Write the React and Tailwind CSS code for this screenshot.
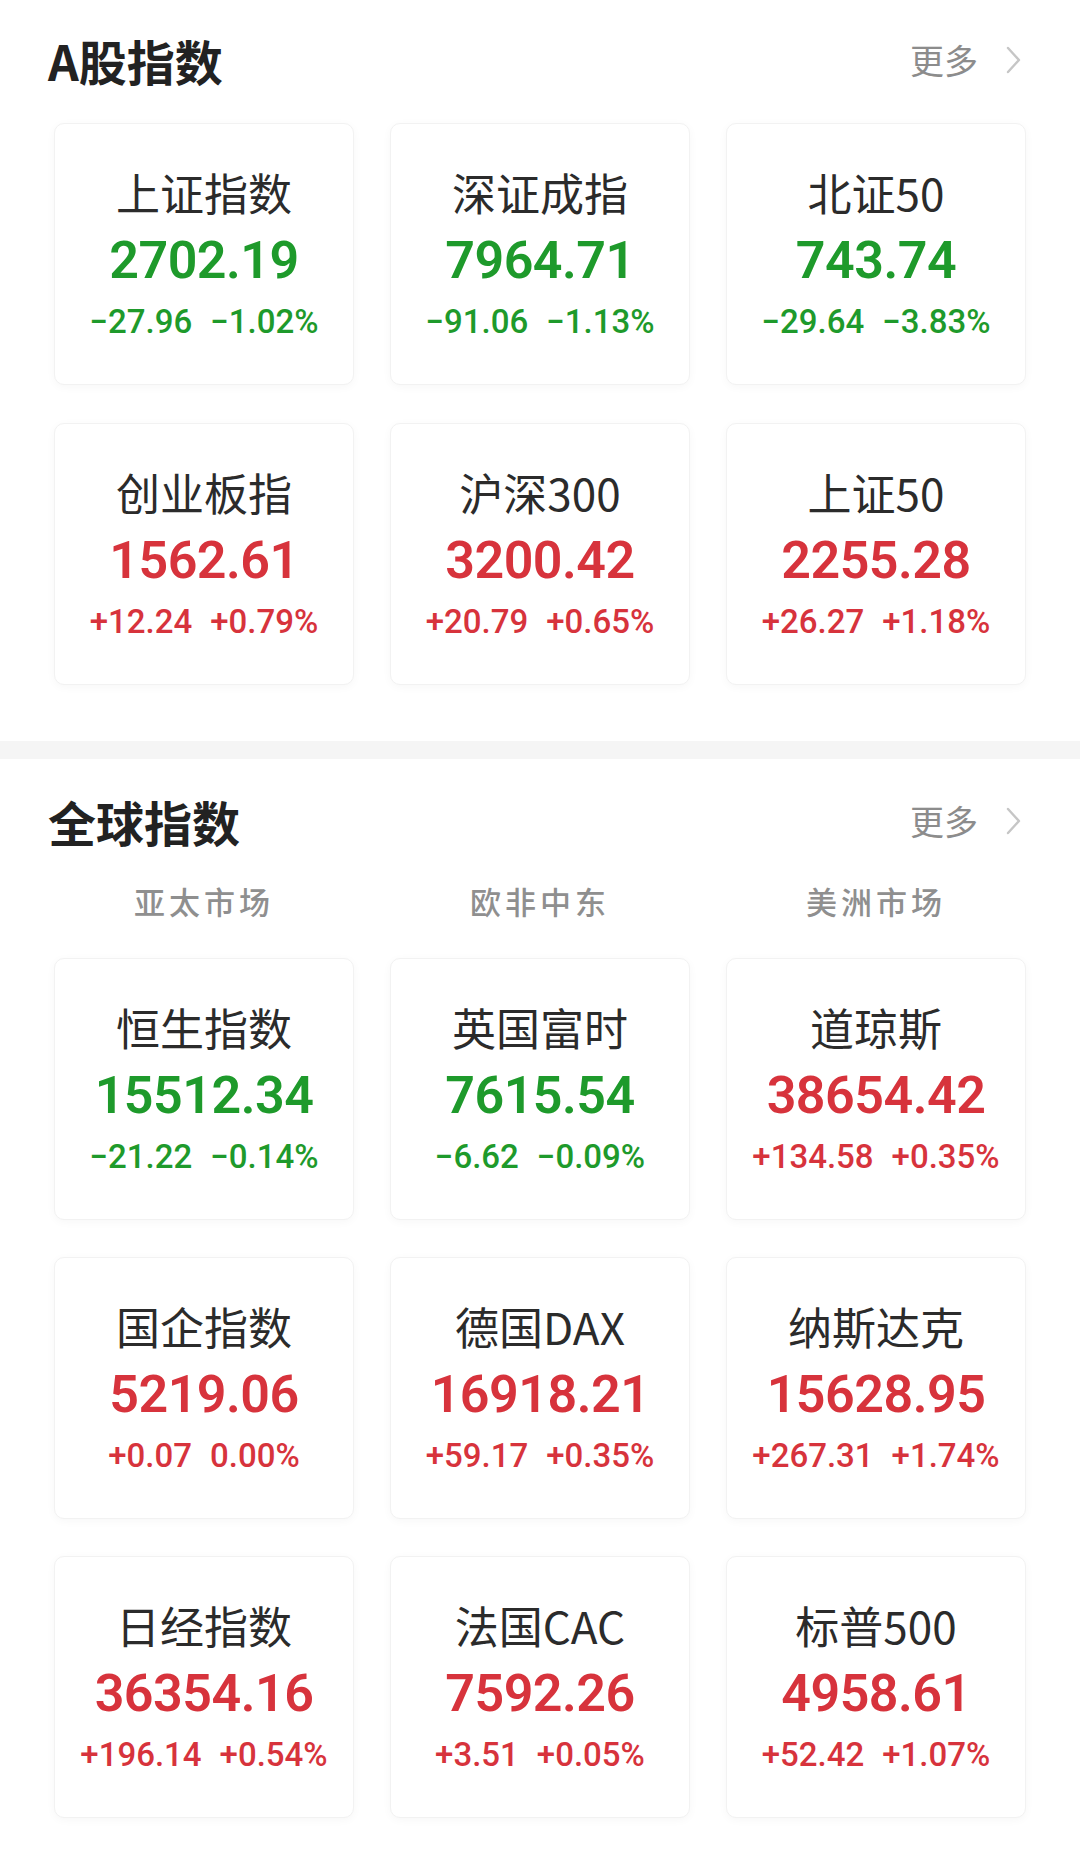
const cjk = '"Noto Sans CJK SC", "Noto Sans", sans-serif'
const num = 'Roboto, "Noto Sans", sans-serif'

const aShares = [
  { name: '上证指数', value: '2702.19', change: '-27.96', pct: '-1.02%' },
  { name: '深证成指', value: '7964.71', change: '-91.06', pct: '-1.13%' },
  { name: '北证50', value: '743.74', change: '-29.64', pct: '-3.83%' },
  { name: '创业板指', value: '1562.61', change: '+12.24', pct: '+0.79%' },
  { name: '沪深300', value: '3200.42', change: '+20.79', pct: '+0.65%' },
  { name: '上证50', value: '2255.28', change: '+26.27', pct: '+1.18%' },
]

const global = [
  { name: '恒生指数', value: '15512.34', change: '-21.22', pct: '-0.14%' },
  { name: '英国富时', value: '7615.54', change: '-6.62', pct: '-0.09%' },
  { name: '道琼斯', value: '38654.42', change: '+134.58', pct: '+0.35%' },
  { name: '国企指数', value: '5219.06', change: '+0.07', pct: '0.00%' },
  { name: '德国DAX', value: '16918.21', change: '+59.17', pct: '+0.35%' },
  { name: '纳斯达克', value: '15628.95', change: '+267.31', pct: '+1.74%' },
  { name: '日经指数', value: '36354.16', change: '+196.14', pct: '+0.54%' },
  { name: '法国CAC', value: '7592.26', change: '+3.51', pct: '+0.05%' },
  { name: '标普500', value: '4958.61', change: '+52.42', pct: '+1.07%' },
]

function SectionHeader({ title }) {
  return (
    <div className="flex h-[120px] items-center justify-between pl-[48px] pr-[58px]">
      <h2 className="text-[48px] font-bold leading-none text-[#222]" style={{ fontFamily: cjk }}>
        {title}
      </h2>
      <div className="flex items-center gap-[26px]">
        <span className="text-[34px] leading-none text-[#8c8c8c]" style={{ fontFamily: cjk }}>
          更多
        </span>
        <svg width="18" height="28" viewBox="0 0 18 28" fill="none">
          <polyline points="4,2 15,14 4,26" stroke="#c6c6c6" strokeWidth="2.4" strokeLinecap="round" strokeLinejoin="round" />
        </svg>
      </div>
    </div>
  )
}

function IndexCard({ item }) {
  const down = item.change.startsWith('-')
  const color = down ? 'text-[#1e9a2b]' : 'text-[#d7333c]'
  return (
    <div className="flex h-[262px] flex-col items-center rounded-[10px] border border-[#f2f2f2] bg-white pt-[38px] shadow-[0_2px_10px_rgba(0,0,0,0.035)]">
      <div className="h-[60px] text-[44px] leading-[60px] text-[#2b2b2b]" style={{ fontFamily: cjk }}>
        {item.name}
      </div>
      <div className={`h-[78px] text-[52px] font-semibold leading-[78px] tracking-[-0.5px] ${color}`} style={{ fontFamily: num }}>
        {item.value}
      </div>
      <div className={`flex h-[44px] gap-[18px] text-[33px] font-medium leading-[44px] ${color}`} style={{ fontFamily: num }}>
        <span>{item.change.replace('-', '−')}</span>
        <span>{item.pct.replace('-', '−')}</span>
      </div>
    </div>
  )
}

export default function App() {
  return (
    <div className="min-h-[1872px] w-[1080px] bg-white">
      <SectionHeader title="A股指数" />
      <div className="mt-[3px] grid grid-cols-3 gap-x-[36px] gap-y-[38px] px-[54px] pb-[56px]">
        {aShares.map((it) => (
          <IndexCard key={it.name} item={it} />
        ))}
      </div>
      <div className="h-[18px] bg-[#f5f5f5]" />
      <div className="h-[2px]" />
      <SectionHeader title="全球指数" />
      <div className="mt-[4px] grid h-[32px] grid-cols-3 gap-x-[36px] px-[54px]">
        {['亚太市场', '欧非中东', '美洲市场'].map((t) => (
          <div
            key={t}
            className="text-center text-[31px] font-medium leading-[32px] tracking-[4px] text-[#8f8f8f]"
            style={{ fontFamily: cjk }}
          >
            {t}
          </div>
        ))}
      </div>
      <div className="mt-[41px] grid grid-cols-3 gap-x-[36px] gap-y-[37px] px-[54px]">
        {global.map((it) => (
          <IndexCard key={it.name} item={it} />
        ))}
      </div>
    </div>
  )
}
